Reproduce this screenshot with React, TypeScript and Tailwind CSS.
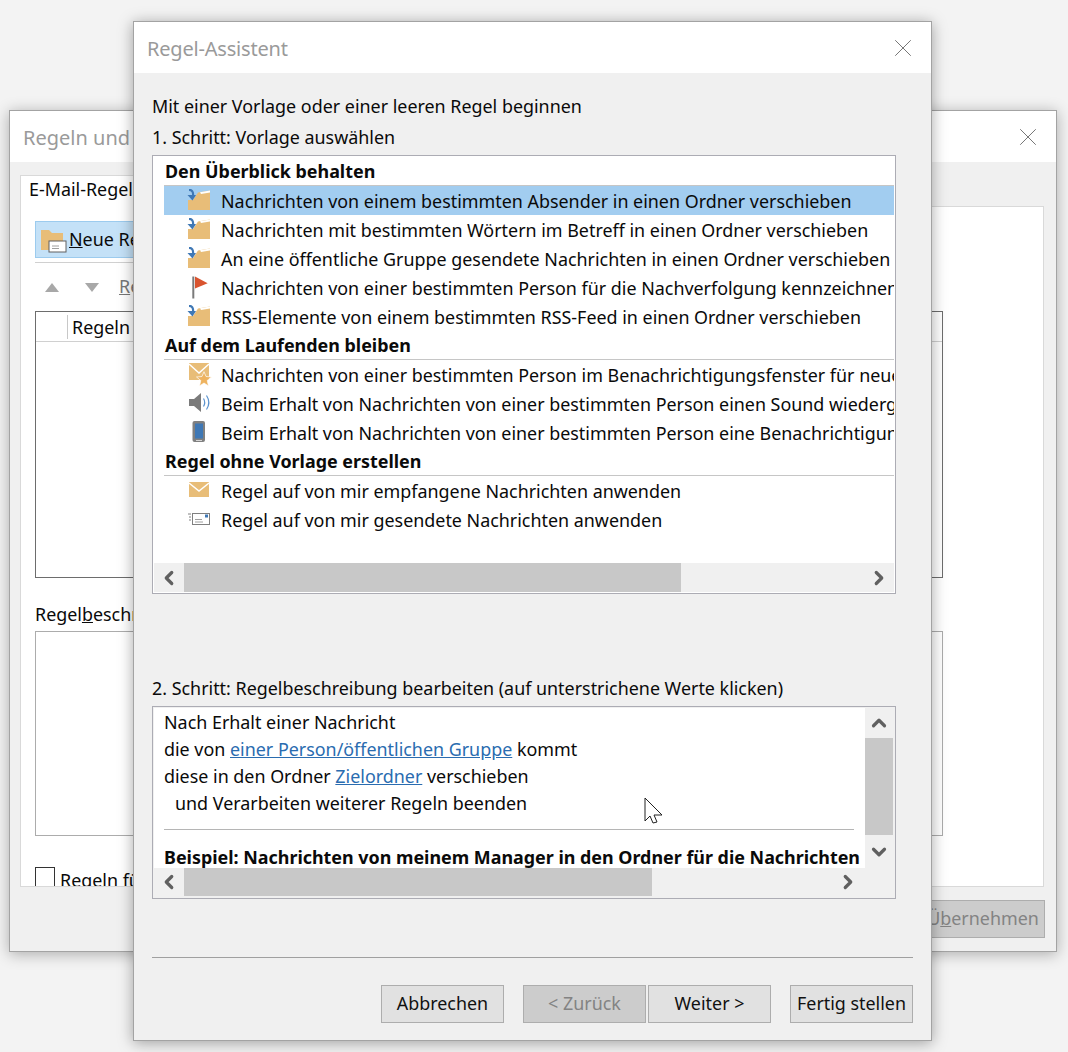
import type { ReactNode } from "react";
import { ChevronLeft, ChevronRight, ChevronUp, ChevronDown, X } from "lucide-react";

const FolderMove = () => (
  <svg width="26" height="24" viewBox="0 0 26 24">
    <path d="M2 11h5l5-7.500 12-2V21H2z" fill="#e8bd78" />
    <path d="M14 3.200l10-1.700v2l-9 1.500z" fill="#ffffff" />
    <path d="M3 0.800c3 0 4.500 2 4 6" fill="none" stroke="#3f78b5" strokeWidth="2.200" />
    <path d="M1.500 6l5 5.500 3.500-5.500z" fill="#3f78b5" />
  </svg>
);

const Flag = () => (
  <svg width="26" height="24" viewBox="0 0 26 24">
    <rect x="6.300" y="0.500" width="2" height="22" fill="#7b7b7b" />
    <path d="M9 0.500l12.700 6.700L9 12.500z" fill="#d9542f" />
  </svg>
);

const MailStar = () => (
  <svg width="26" height="24" viewBox="0 0 26 24">
    <path d="M3 0h20v17H3z" fill="#e8bd78" />
    <path d="M3 1l10 9 10-9" fill="none" stroke="#ffffff" strokeWidth="1.500" />
    <path d="M18 8.700l2 4.800 5.500.5-4.300 3.500 1.300 5.500-4.500-3-4.500 3 1.300-5.500-4.300-3.500 5.500-.5z" fill="#eeb35f" stroke="#ffffff" strokeWidth="0.700" />
  </svg>
);

const Speaker = () => (
  <svg width="26" height="24" viewBox="0 0 26 24">
    <path d="M3 7h5l7-6v19l-7-6H3z" fill="#7b7b7b" />
    <path d="M17.500 6.500c1.500 2.500 1.500 5.500 0 8M20.500 3.500c3 4.500 3 9.500 0 14" fill="none" stroke="#5b93cf" strokeWidth="1.200" />
  </svg>
);

const Phone = () => (
  <svg width="26" height="24" viewBox="0 0 26 24">
    <rect x="6.500" y="0" width="12.500" height="21" rx="2" fill="#808080" />
    <rect x="9" y="2.500" width="8" height="15" fill="#3f78b5" />
    <rect x="10" y="19" width="6" height="1" fill="#d5d5d5" />
  </svg>
);

const Mail = () => (
  <svg width="26" height="24" viewBox="0 0 26 24">
    <path d="M3 3h20v15H3z" fill="#e8bd78" />
    <path d="M3 4l10 8 10-8" fill="none" stroke="#ffffff" strokeWidth="1.500" />
  </svg>
);

const SentMail = () => (
  <svg width="26" height="24" viewBox="0 0 26 24">
    <rect x="6.500" y="5.500" width="17" height="11" fill="#ffffff" stroke="#808080" />
    <rect x="19" y="6.500" width="3" height="3" fill="#3f78b5" />
    <path d="M9 11.500h7M9 14h8" stroke="#a0a0a0" />
    <path d="M2 6h3M3 9h2M3 12h2" stroke="#808080" />
  </svg>
);

const Row = ({ icon, text, active }: { icon: ReactNode; text: string; active?: boolean }) => (
  <div className={`flex h-[29px] items-center pl-[22px] whitespace-nowrap ${active ? "bg-[#a2cdf0]" : ""}`}>
    <span className="flex w-[35px] shrink-0">{icon}</span>
    <span className="pt-[2px]">{text}</span>
  </div>
);

const Group = ({ text }: { text: string }) => (
  <div className="flex h-[29px] items-center border-b border-[#c6c6c6] pl-[1px] pt-[2px] font-bold whitespace-nowrap">{text}</div>
);

const HScroll = ({ thumb, right }: { thumb: string; right: string }) => (
  <div className={`flex shrink-0 items-center bg-[#f0f0f0] ${right}`}>
    <span className="flex w-[30px] shrink-0 justify-center">
      <ChevronLeft size={22} strokeWidth={3.500} color="#606060" />
    </span>
    <div className={`h-full bg-[#c8c8c8] ${thumb}`} />
    <span className="ml-auto flex w-[30px] shrink-0 justify-center">
      <ChevronRight size={22} strokeWidth={3.500} color="#606060" />
    </span>
  </div>
);

const Button = ({ children, disabled, className = "" }: { children: ReactNode; disabled?: boolean; className?: string }) => (
  <div
    className={`flex h-[38px] w-[123px] items-center justify-center border border-[#adadad] ${
      disabled ? "bg-[#cccccc] text-[#838383]" : "bg-[#e1e1e1] text-[#111111]"
    } ${className}`}
  >
    {children}
  </div>
);

const BackWindow = () => (
  <div className="absolute isolate left-[9px] top-[110px] flex h-[842px] w-[1048px] flex-col border border-[#a3a3a3] bg-[#f0f0f0] shadow-[0_2px_14px_rgba(0,0,0,0.3)]">
    <div className="flex h-[51px] shrink-0 items-center justify-between bg-white pl-[13px] pr-[13px] text-[20px] text-[#9a9a9a]">
      <span className="pt-[2px]">Regeln und Benachrichtigungen</span>
      <X size={30} strokeWidth={0.800} color="#777777" />
    </div>
    <div className="relative ml-[10px] mr-[12px] mt-[13px] h-[712px]">
      <div className="absolute left-0 top-0 z-10 flex h-[32px] w-[130px] items-center border border-b-0 border-[#d9d9d9] bg-white pb-[3px] pl-[8px] whitespace-nowrap">
        E-Mail-Regeln
      </div>
      <div className="mt-[31px] flex h-[681px] flex-col overflow-hidden border border-[#d9d9d9] bg-white pl-[14px] pr-[100px]">
        <div className="mt-[14px] flex h-[37px] w-[300px] shrink-0 items-center border border-[#9ccbee] bg-[#c4e1f7] pl-[5px]">
          <svg width="26" height="26" viewBox="0 0 26 26" className="mr-[2px]">
            <path d="M0 3h8l3 3h11v17H0z" fill="#e8bd78" />
            <rect x="8" y="14" width="17" height="11" fill="#ffffff" stroke="#606060" />
            <path d="M11 19h7M11 21.500h7" stroke="#a0a0a0" />
          </svg>
          <span><u>N</u>eue Regel...</span>
        </div>
        <div className="mt-[4px] h-px w-[300px] shrink-0 bg-[#d0d0d0]" />
        <div className="flex h-[48px] shrink-0 items-center gap-[26px] pl-[10px] text-[#a8a8a8]">
          <svg width="14" height="9" viewBox="0 0 14 9"><path d="M7 0l7 9H0z" fill="#a8a8a8" /></svg>
          <svg width="14" height="9" viewBox="0 0 14 9"><path d="M0 0h14L7 9z" fill="#a8a8a8" /></svg>
          <span className="-ml-[6px] text-[#777777]"><u>R</u>egel</span>
        </div>
        <div className="h-[267px] shrink-0 border border-[#6d6d6d]">
          <div className="flex h-[30px] items-center border-b border-[#d0d0d0]">
            <span className="h-[24px] w-[32px] border-r border-[#c8c8c8]" />
            <span className="pl-[4px] pt-[3px]">Regeln</span>
          </div>
        </div>
        <div className="mt-[24px] flex h-[24px] shrink-0 items-center pt-[2px]">Regel<u>b</u>eschreibung</div>
        <div className="mt-[5px] h-[205px] shrink-0 border border-[#acacac]" />
        <div className="mt-[31px] flex items-start gap-[5px]">
          <span className="h-[20px] w-[20px] shrink-0 border border-[#333333] bg-white" />
          <span className="leading-[26px]">Regeln für</span>
        </div>
      </div>
    </div>
    <div className="mr-[11px] mt-[13px] flex justify-end">
      <Button disabled className="w-[124px]"><span>Ü<u>b</u>ernehmen</span></Button>
    </div>
  </div>
);

const App = () => (
  <div className="relative h-[1052px] w-[1068px] overflow-hidden bg-[#f3f3f3] text-[17.900px] leading-none text-[#0a0a0a] [font-family:'Noto_Sans','Open_Sans',sans-serif]">
    <BackWindow />
    <div className="absolute left-[133px] top-[21px] flex h-[1020px] w-[799px] flex-col border border-[#a3a3a3] bg-[#f0f0f0] shadow-[0_2px_14px_rgba(0,0,0,0.35)]">
      <div className="flex h-[51px] shrink-0 items-center justify-between bg-white pl-[13px] pr-[13px] text-[20px] tracking-[-0.2px] text-[#9a9a9a]">
        <span className="pt-[2px]">Regel-Assistent</span>
        <X size={30} strokeWidth={0.800} color="#777777" />
      </div>
      <div className="flex flex-1 flex-col px-[18px]">
        <div className="mt-[23px] flex h-[22px] items-center">Mit einer Vorlage oder einer leeren Regel beginnen</div>
        <div className="mt-[9px] flex h-[22px] items-center">1. Schritt: Vorlage auswählen</div>
        <div className="mt-[6px] flex h-[439px] w-[744px] shrink-0 flex-col border border-[#acacb4] bg-white p-px">
          <div className="flex-1 overflow-hidden pl-[10px]">
            <Group text="Den Überblick behalten" />
            <Row active icon={<FolderMove />} text="Nachrichten von einem bestimmten Absender in einen Ordner verschieben" />
            <Row icon={<FolderMove />} text="Nachrichten mit bestimmten Wörtern im Betreff in einen Ordner verschieben" />
            <Row icon={<FolderMove />} text="An eine öffentliche Gruppe gesendete Nachrichten in einen Ordner verschieben" />
            <Row icon={<Flag />} text="Nachrichten von einer bestimmten Person für die Nachverfolgung kennzeichnen" />
            <Row icon={<FolderMove />} text="RSS-Elemente von einem bestimmten RSS-Feed in einen Ordner verschieben" />
            <Group text="Auf dem Laufenden bleiben" />
            <Row icon={<MailStar />} text="Nachrichten von einer bestimmten Person im Benachrichtigungsfenster für neue Elemente anzeigen" />
            <Row icon={<Speaker />} text="Beim Erhalt von Nachrichten von einer bestimmten Person einen Sound wiedergeben" />
            <Row icon={<Phone />} text="Beim Erhalt von Nachrichten von einer bestimmten Person eine Benachrichtigung senden" />
            <Group text="Regel ohne Vorlage erstellen" />
            <Row icon={<Mail />} text="Regel auf von mir empfangene Nachrichten anwenden" />
            <Row icon={<SentMail />} text="Regel auf von mir gesendete Nachrichten anwenden" />
          </div>
          <HScroll thumb="w-[497px]" right="h-[29px]" />
        </div>
        <div className="mt-[84px] flex h-[22px] items-center">2. Schritt: Regelbeschreibung bearbeiten (auf unterstrichene Werte klicken)</div>
        <div className="relative mt-[6px] flex h-[193px] w-[744px] shrink-0 flex-col border border-[#acacb4] bg-[#f0f0f0] p-px">
          <div className="flex h-[160px] shrink-0">
            <div className="w-[711px] overflow-hidden bg-white pl-[10px] pt-[1px]">
              <div className="flex h-[27px] items-center">Nach Erhalt einer Nachricht</div>
              <div className="flex h-[27px] items-center whitespace-pre">die von <u className="text-[#2a6cb0]">einer Person/öffentlichen Gruppe</u> kommt</div>
              <div className="flex h-[27px] items-center whitespace-pre">diese in den Ordner <u className="text-[#2a6cb0]">Zielordner</u> verschieben</div>
              <div className="flex h-[27px] items-center pl-[11px]">und Verarbeiten weiterer Regeln beenden</div>
              <div className="mt-[12px] h-px w-[690px] bg-[#b5b5b5]" />
              <div className="mt-[19px] font-bold whitespace-nowrap">Beispiel: Nachrichten von meinem Manager in den Ordner für die Nachrichten markieren</div>
            </div>
            <div className="flex w-[28px] shrink-0 flex-col items-center bg-[#f0f0f0]">
              <span className="flex h-[30px] items-center"><ChevronUp size={22} strokeWidth={3.500} color="#606060" /></span>
              <div className="h-[97px] w-full bg-[#c8c8c8]" />
              <span className="flex flex-1 items-center"><ChevronDown size={22} strokeWidth={3.500} color="#606060" /></span>
            </div>
          </div>
          <HScroll thumb="w-[468px]" right="h-[28px] mr-[31px]" />
        </div>
        <div className="mt-[58px] h-px w-[761px] shrink-0 bg-[#a0a0a0]" />
        <div className="mt-[27px] flex w-[761px] justify-end">
          <Button>Abbrechen</Button>
          <Button disabled className="ml-[19px]">&lt; Zurück</Button>
          <Button className="ml-[2px]">Weiter &gt;</Button>
          <Button className="ml-[19px]">Fertig stellen</Button>
        </div>
      </div>
    </div>
    <svg className="absolute left-[644px] top-[797px]" width="20" height="29" viewBox="0 0 20 29">
      <path d="M1 1v23l5-5 3 7 4-1-3-7h8z" fill="#ffffff" stroke="#222222" />
    </svg>
  </div>
);

export default App;
